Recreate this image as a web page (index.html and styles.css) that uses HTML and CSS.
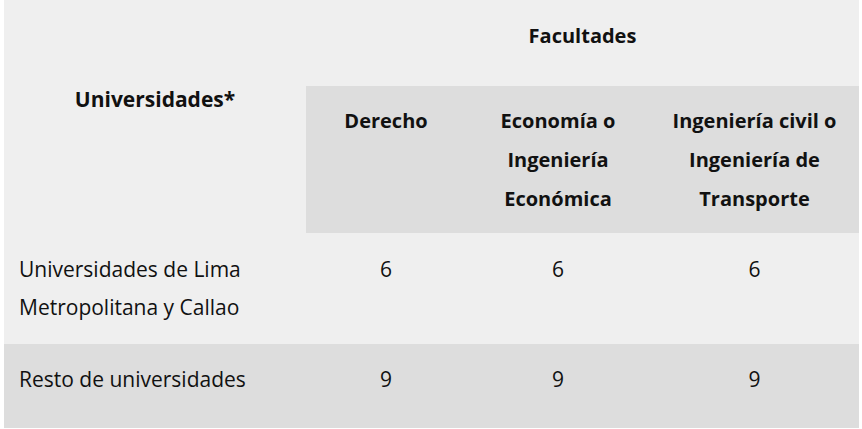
FILE: index.html
```html
<!DOCTYPE html>
<html lang="es">
<head>
<meta charset="utf-8">
<title>Tabla</title>
<link rel="stylesheet" href="styles.css">
</head>
<body>
<table class="grid">
  <colgroup>
    <col class="c-uni">
    <col class="c-der">
    <col class="c-eco">
    <col class="c-ing">
  </colgroup>
  <thead>
    <tr class="head-top">
      <th rowspan="2" class="uni-head">Universidades*</th>
      <th colspan="3" class="fac-head">Facultades</th>
    </tr>
    <tr class="head-sub">
      <th>Derecho</th>
      <th>Economía o Ingeniería Económica</th>
      <th>Ingeniería civil o Ingeniería de Transporte</th>
    </tr>
  </thead>
  <tbody>
    <tr class="row-light">
      <td class="name">Universidades de Lima Metropolitana y Callao</td>
      <td class="num">6</td>
      <td class="num">6</td>
      <td class="num">6</td>
    </tr>
    <tr class="row-dark">
      <td class="name">Resto de universidades</td>
      <td class="num">9</td>
      <td class="num">9</td>
      <td class="num">9</td>
    </tr>
  </tbody>
</table>
</body>
</html>
```
FILE: styles.css
```css
html, body {
  margin: 0;
  padding: 0;
  background: #ffffff;
}
body {
  padding-left: 4px;
  font-family: "Open Sans", "Liberation Sans", sans-serif;
  font-size: 21px;
  line-height: 38px;
  color: #111111;
}
.grid {
  border-collapse: collapse;
  border-spacing: 0;
  table-layout: fixed;
  width: 855px;
  background: #efefef;
}
.c-uni { width: 302px; }
.c-der { width: 160px; }
.c-eco { width: 184px; }
.c-ing { width: 209px; }

th, td {
  padding: 0;
  text-align: center;
}
th {
  font-size: 20px;
  font-weight: 700;
  line-height: 39px;
}
.uni-head {
  font-size: 21px;
  vertical-align: top;
  padding-top: 80px;
}
.fac-head {
  height: 86px;
  box-sizing: border-box;
  padding: 16px 0 31px;
  vertical-align: top;
}
.head-sub th {
  background: #dddddd;
  vertical-align: top;
  padding: 15px 8px 15px;
}
tbody td {
  vertical-align: top;
}
.row-light td {
  padding-top: 17px;
  padding-bottom: 18px;
}
.row-dark td {
  background: #dddddd;
  padding-top: 16px;
  padding-bottom: 30px;
}
.name {
  text-align: left;
  padding-left: 15px;
}
```
